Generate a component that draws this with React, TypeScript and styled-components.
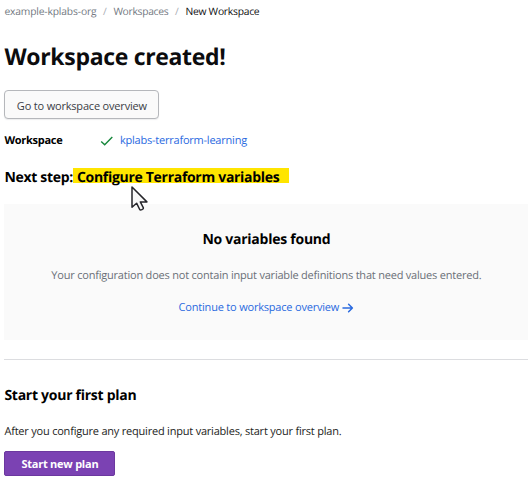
import React from "react";
import styled, { createGlobalStyle } from "styled-components";

const GlobalStyle = createGlobalStyle`
  * { box-sizing: border-box; }
  body {
    margin: 0;
    background: #fff;
    color: #0c0c0e;
    font: 400 11px/20px "Open Sans", "Noto Sans", sans-serif;
    text-rendering: geometricPrecision;
    overflow: hidden;
  }
`;

const Page = styled.main`
  display: flex;
  flex-direction: column;
  align-items: flex-start;
  width: 531px;
  height: 477px;
  padding: 2px 2.6px 0 4.4px;
  overflow: hidden;
`;

const Breadcrumbs = styled.nav`
  display: flex;
  height: 20px;
  font-size: 10.3px;
`;

const Crumb = styled.a<{ $current?: boolean; $width: number; $tracking: number }>`
  width: ${(p) => p.$width}px;
  letter-spacing: ${(p) => p.$tracking}px;
  color: ${(p) => (p.$current ? "#0c0c0e" : "#727881")};
  white-space: nowrap;
`;

const Separator = styled.span`
  width: 17px;
  text-align: center;
  color: #a9adb4;
`;

const Title = styled.h1`
  margin: 18px 0 0;
  font-size: 23px;
  line-height: 32px;
  font-weight: 700;
  letter-spacing: -0.32px;
`;

const Heading = styled.h2<{ $tracking: number }>`
  margin: 0;
  font-size: 14px;
  line-height: 20px;
  font-weight: 700;
  letter-spacing: ${(p) => p.$tracking}px;
  color: #000;
  white-space: nowrap;
`;

const SecondaryButton = styled.button`
  width: 155px;
  height: 29px;
  margin-top: 18px;
  padding: 2px 0 0;
  border: 1px solid #b5b7bb;
  border-radius: 4px;
  background: #fafafa;
  box-shadow: 0 1px 1px rgba(101, 106, 118, 0.12);
  color: #3b3d45;
  font: inherit;
  letter-spacing: -0.183px;
`;

const Details = styled.dl`
  display: grid;
  grid-template-columns: 95.5px 20px auto;
  align-items: center;
  height: 20px;
  margin: 12px 0 0;
`;

const Term = styled.dt`
  font-weight: 700;
  letter-spacing: -0.275px;
  color: #000;
`;

const Value = styled.dd`
  margin: 0;
`;

const Link = styled.a<{ $tracking: number }>`
  display: inline-flex;
  align-items: center;
  letter-spacing: ${(p) => p.$tracking}px;
  color: #2a6adf;
  white-space: nowrap;
`;

const CheckIcon = styled.svg`
  display: block;
  width: 14px;
  height: 12px;
`;

const NextStep = styled.div`
  position: relative;
  display: flex;
  align-items: flex-start;
  height: 20px;
  margin-top: 17px;
`;

const Highlight = styled.mark`
  display: flex;
  align-items: flex-start;
  width: 216px;
  height: 15px;
  padding-left: 4px;
  background: #ffe500;
  color: #000;
`;

const Cursor = styled.svg`
  position: absolute;
  left: 125.6px;
  top: 17px;
  width: 20px;
  height: 28px;
`;

const EmptyState = styled.section`
  display: flex;
  flex-direction: column;
  align-items: center;
  width: 524px;
  height: 136px;
  margin-top: 16px;
  padding-top: 26px;
  background: #fafafa;
`;

const Message = styled.p`
  margin: 16px 0 12px;
  letter-spacing: -0.208px;
  color: #6b7078;
  white-space: nowrap;
`;

const ArrowIcon = styled.svg`
  width: 12px;
  height: 12px;
  margin: 0 0 0 3px;
`;

const Divider = styled.hr`
  width: 524px;
  height: 1px;
  margin: 19px 0 26px;
  border: 0;
  background: #dcdde0;
`;

const Instructions = styled.p`
  margin: 16px 0 9px;
  letter-spacing: -0.209px;
  color: #1d1e22;
  white-space: nowrap;
`;

const PrimaryButton = styled.button`
  width: 111px;
  height: 25px;
  padding: 1px 0 0;
  border: 1px solid #6c389f;
  border-radius: 2px;
  background: #7b42b3;
  color: #fff;
  font: inherit;
  font-weight: 700;
  letter-spacing: -0.235px;
`;

export default function App() {
  return (
    <>
      <GlobalStyle />
      <Page>
        <Breadcrumbs>
          <Crumb $width={92} $tracking={-0.165}>example-kplabs-org</Crumb>
          <Separator>/</Separator>
          <Crumb $width={55} $tracking={-0.29}>Workspaces</Crumb>
          <Separator>/</Separator>
          <Crumb $current $width={75} $tracking={-0.242}>New Workspace</Crumb>
        </Breadcrumbs>
        <Title>Workspace created!</Title>
        <SecondaryButton>Go to workspace overview</SecondaryButton>
        <Details>
          <Term>Workspace</Term>
          <Value>
            <CheckIcon viewBox="0 0 14 12" fill="none">
              <path d="M1.2 6.4 4.7 9.8 12.3 2" stroke="#16873b" strokeWidth="1.4" />
            </CheckIcon>
          </Value>
          <Value>
            <Link $tracking={-0.217}>kplabs-terraform-learning</Link>
          </Value>
        </Details>
        <NextStep>
          <Heading $tracking={-0.312}>Next step:</Heading>
          <Highlight>
            <Heading $tracking={-0.296}>Configure Terraform variables</Heading>
          </Highlight>
          <Cursor viewBox="0 0 20 28">
            <path
              d="M2 2v20.2l4.6-4 3.1 6.3c.6 1.2 4.3-.3 3.7-1.7l-3.1-5.9h6.6z"
              fill="#f8f8f8"
              stroke="#25252a"
              strokeWidth="1.5"
              strokeLinejoin="round"
            />
          </Cursor>
        </NextStep>
        <EmptyState>
          <Heading $tracking={-0.252}>No variables found</Heading>
          <Message>
            Your configuration does not contain input variable definitions that need values entered.
          </Message>
          <Link $tracking={-0.197}>
            Continue to workspace overview
            <ArrowIcon viewBox="0 0 12 12" fill="none" stroke="#2a6adf" strokeWidth="1.5" strokeLinecap="round" strokeLinejoin="round">
              <path d="M1 6h9.4M6.6 2.2 10.4 6 6.6 9.8" />
            </ArrowIcon>
          </Link>
        </EmptyState>
        <Divider />
        <Heading $tracking={-0.267}>Start your first plan</Heading>
        <Instructions>
          After you configure any required input variables, start your first plan.
        </Instructions>
        <PrimaryButton>Start new plan</PrimaryButton>
      </Page>
    </>
  );
}
